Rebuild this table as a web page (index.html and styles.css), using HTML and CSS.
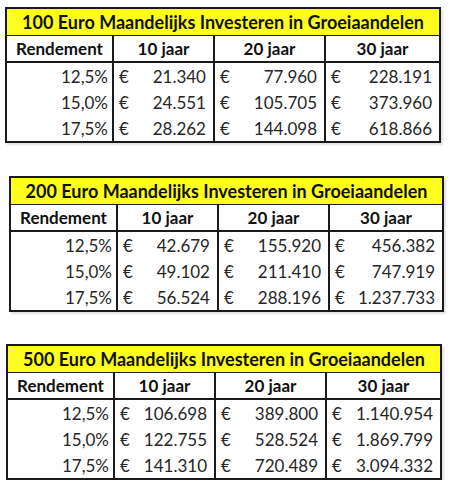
FILE: index.html
```html
<!DOCTYPE html>
<html>
<head>
<meta charset="utf-8">
<link rel="stylesheet" href="styles.css">
</head>
<body>
<div class="page">
  <table class="grid t1">
    <colgroup><col class="c1"><col class="c2"><col class="c3"><col class="c4"></colgroup>
    <tr class="title"><td colspan="4">100 Euro Maandelijks Investeren in Groeiaandelen</td></tr>
    <tr class="head"><td>Rendement</td><td>10 jaar</td><td>20 jaar</td><td>30 jaar</td></tr>
    <tr class="row"><td class="pct">12,5%</td><td><div class="val"><span>€</span><span>21.340</span></div></td><td><div class="val"><span>€</span><span>77.960</span></div></td><td><div class="val"><span>€</span><span>228.191</span></div></td></tr>
    <tr class="row"><td class="pct">15,0%</td><td><div class="val"><span>€</span><span>24.551</span></div></td><td><div class="val"><span>€</span><span>105.705</span></div></td><td><div class="val"><span>€</span><span>373.960</span></div></td></tr>
    <tr class="row last"><td class="pct">17,5%</td><td><div class="val"><span>€</span><span>28.262</span></div></td><td><div class="val"><span>€</span><span>144.098</span></div></td><td><div class="val"><span>€</span><span>618.866</span></div></td></tr>
  </table>

  <table class="grid t2">
    <colgroup><col class="c1"><col class="c2"><col class="c3"><col class="c4b"></colgroup>
    <tr class="title"><td colspan="4">200 Euro Maandelijks Investeren in Groeiaandelen</td></tr>
    <tr class="head"><td>Rendement</td><td>10 jaar</td><td>20 jaar</td><td>30 jaar</td></tr>
    <tr class="row"><td class="pct">12,5%</td><td><div class="val"><span>€</span><span>42.679</span></div></td><td><div class="val"><span>€</span><span>155.920</span></div></td><td><div class="val"><span>€</span><span>456.382</span></div></td></tr>
    <tr class="row"><td class="pct">15,0%</td><td><div class="val"><span>€</span><span>49.102</span></div></td><td><div class="val"><span>€</span><span>211.410</span></div></td><td><div class="val"><span>€</span><span>747.919</span></div></td></tr>
    <tr class="row last"><td class="pct">17,5%</td><td><div class="val"><span>€</span><span>56.524</span></div></td><td><div class="val"><span>€</span><span>288.196</span></div></td><td><div class="val"><span>€</span><span>1.237.733</span></div></td></tr>
  </table>

  <table class="grid t3">
    <colgroup><col class="c1"><col class="c2"><col class="c3"><col class="c4"></colgroup>
    <tr class="title"><td colspan="4">500 Euro Maandelijks Investeren in Groeiaandelen</td></tr>
    <tr class="head"><td>Rendement</td><td>10 jaar</td><td>20 jaar</td><td>30 jaar</td></tr>
    <tr class="row"><td class="pct">12,5%</td><td><div class="val"><span>€</span><span>106.698</span></div></td><td><div class="val"><span>€</span><span>389.800</span></div></td><td><div class="val"><span>€</span><span>1.140.954</span></div></td></tr>
    <tr class="row"><td class="pct">15,0%</td><td><div class="val"><span>€</span><span>122.755</span></div></td><td><div class="val"><span>€</span><span>528.524</span></div></td><td><div class="val"><span>€</span><span>1.869.799</span></div></td></tr>
    <tr class="row last"><td class="pct">17,5%</td><td><div class="val"><span>€</span><span>141.310</span></div></td><td><div class="val"><span>€</span><span>720.489</span></div></td><td><div class="val"><span>€</span><span>3.094.332</span></div></td></tr>
  </table>
</div>
</body>
</html>
```

FILE: styles.css
```css
html, body {
  margin: 0;
  padding: 0;
  background: #ffffff;
}

.page {
  display: flex;
  flex-direction: column;
  align-items: flex-start;
  padding-top: 7px;
  font-family: Lato, "Open Sans", sans-serif;
}

.grid {
  border-collapse: collapse;
  table-layout: fixed;
  border: 2px solid #1a1a1a;
  box-shadow: 2px 2px 2px rgba(0,0,0,0.12);
}

.t1 { margin-left: 5px; }
.t2 { margin-left: 9px; margin-top: 33px; }
.t3 { margin-left: 6px; margin-top: 32px; }

.c1 { width: 107px; }
.c2 { width: 101px; }
.c3 { width: 111px; }
.c4 { width: 115px; }
.c4b { width: 114px; }

.grid td {
  padding: 0;
  white-space: nowrap;
}

.title td {
  height: 26px;
  background: #ffff1e;
  color: #111;
  font-weight: 700;
  font-size: 18px;
  text-align: center;
  border-bottom: 1px solid #222;
}

.head td {
  height: 25px;
  color: #111;
  font-weight: 700;
  font-size: 17px;
  text-align: center;
  border-bottom: 2px solid #1a1a1a;
  border-left: 2px solid #1a1a1a;
}

.head td:first-child { border-left: none; }

.row td {
  height: 26px;
  color: #262626;
  font-size: 17px;
  border-left: 2px solid #1a1a1a;
}

.row td:first-child { border-left: none; }

.pct {
  text-align: right;
  padding-right: 4px !important;
}

.val {
  display: flex;
  justify-content: space-between;
  padding: 0 7px 0 5px;
}
```
